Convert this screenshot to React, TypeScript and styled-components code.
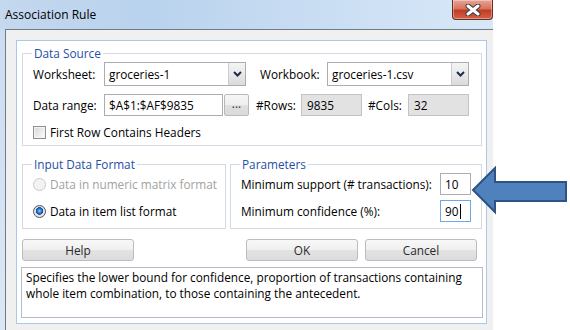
import React from 'react'
import styled, { createGlobalStyle } from 'styled-components'

const GlobalStyle = createGlobalStyle`
  html, body {
    margin: 0;
    padding: 0;
    background: #ffffff;
  }
  body {
    font-family: 'Open Sans', 'Liberation Sans', Arial, sans-serif;
    font-size: 11.8px;
    color: #000;
  }
  * {
    box-sizing: border-box;
  }
`

const App = () => {
  return (
    <Page>
      <GlobalStyle />
      <Window>
        <TitleBar>
          <Title>Association Rule</Title>
          <CloseButton>
            <svg width="16" height="12" viewBox="0 0 16 12">
              <path d="M3 2 L13 10 M13 2 L3 10" stroke="#3b3b3b" strokeWidth="5" strokeLinecap="round" />
              <path d="M3 2 L13 10 M13 2 L3 10" stroke="#ffffff" strokeWidth="3" strokeLinecap="round" />
            </svg>
          </CloseButton>
        </TitleBar>
        <Client>
          <Panel>
            <GroupBox $pb={5}>
              <Legend>Data Source</Legend>
              <Row $h={24}>
                <FieldLabel $w={71}>Worksheet:</FieldLabel>
                <ComboBox $w={142}>
                  <span>groceries-1</span>
                  <DropButton>
                    <svg width="9" height="6" viewBox="0 0 9 6">
                      <path d="M1 1 L4.5 4.5 L8 1" stroke="#1c2d4c" strokeWidth="2" fill="none" />
                    </svg>
                  </DropButton>
                </ComboBox>
                <FieldLabel $w={67} $ml={14}>Workbook:</FieldLabel>
                <ComboBox $w={142}>
                  <span>groceries-1.csv</span>
                  <DropButton>
                    <svg width="9" height="6" viewBox="0 0 9 6">
                      <path d="M1 1 L4.5 4.5 L8 1" stroke="#1c2d4c" strokeWidth="2" fill="none" />
                    </svg>
                  </DropButton>
                </ComboBox>
              </Row>
              <Row $h={22} $mt={8}>
                <FieldLabel $w={71}>Data range:</FieldLabel>
                <TextField $w={119}>$A$1:$AF$9835</TextField>
                <BrowseButton>...</BrowseButton>
                <FieldLabel $w={45} $ml={7}>#Rows:</FieldLabel>
                <TextField $w={61} $readOnly>9835</TextField>
                <FieldLabel $w={40} $ml={6}>#Cols:</FieldLabel>
                <TextField $w={61} $readOnly>32</TextField>
              </Row>
              <Row $h={16} $mt={8}>
                <CheckBox />
                <OptionText>First Row Contains Headers</OptionText>
              </Row>
            </GroupBox>

            <BottomGroups>
              <GroupBox $w={204} $pb={6}>
                <Legend>Input Data Format</Legend>
                <Row $h={22}>
                  <Radio />
                  <OptionText $disabled>Data in numeric matrix format</OptionText>
                </Row>
                <Row $h={22} $mt={5}>
                  <Radio $checked />
                  <OptionText>Data in item list format</OptionText>
                </Row>
              </GroupBox>
              <GroupBox $grow $pb={6}>
                <Legend>Parameters</Legend>
                <Row $h={22}>
                  <FieldLabel $grow>Minimum support (# transactions):</FieldLabel>
                  <TextField $w={31}>10</TextField>
                </Row>
                <Row $h={22} $mt={5}>
                  <FieldLabel $grow>Minimum confidence (%):</FieldLabel>
                  <TextField $w={31} $focused>
                    90
                    <Caret />
                  </TextField>
                </Row>
              </GroupBox>
            </BottomGroups>

            <ButtonRow>
              <PushButton>Help</PushButton>
              <ButtonGroup>
                <PushButton>OK</PushButton>
                <PushButton>Cancel</PushButton>
              </ButtonGroup>
            </ButtonRow>

            <Description>
              Specifies the lower bound for confidence, proportion of transactions containing
              whole item combination, to those containing the antecedent.
            </Description>
          </Panel>
        </Client>
      </Window>

      <Arrow width="98" height="50" viewBox="0 0 98 50">
        <polygon
          points="2,24 24,2 24,16 95,16 95,35 24,35 24,46"
          fill="#4f81bd"
          stroke="#2f5382"
          strokeWidth="2"
          strokeLinejoin="miter"
        />
      </Arrow>
    </Page>
  )
}

export default App

interface RowProps {
  $h: number
  $mt?: number
}
interface LabelProps {
  $w?: number
  $ml?: number
  $grow?: boolean
}
interface FieldProps {
  $w: number
  $readOnly?: boolean
  $focused?: boolean
}
interface GroupProps {
  $w?: number
  $grow?: boolean
  $pb: number
}

const Page = styled.div`
  position: relative;
  width: 570px;
  height: 330px;
  overflow: hidden;
  background: #ffffff;
`

const Window = styled.div`
  width: 493px;
  height: 330px;
  display: flex;
  flex-direction: column;
  background: linear-gradient(to bottom, #c9dcf1, #dbe7f4);
`

const TitleBar = styled.div`
  height: 29px;
  flex-shrink: 0;
  display: flex;
  justify-content: space-between;
  align-items: flex-start;
  background: linear-gradient(to right, #c4d8ee 0%, #b9d2ed 30%, #c7dcf2 60%, #d8e8f8 100%);
`

const Title = styled.div`
  padding-left: 5px;
  line-height: 29px;
  font-size: 12px;
  color: #000;
`

const CloseButton = styled.div`
  width: 41px;
  height: 20px;
  display: flex;
  align-items: center;
  justify-content: center;
  border: 1px solid #6d2a1f;
  border-top: none;
  border-radius: 0 0 4px 4px;
  background: linear-gradient(to bottom, #e7a596 0%, #d8735e 45%, #c23b22 55%, #d0654a 100%);
  box-shadow: inset 0 0 0 1px rgba(255, 255, 255, 0.35);
`

const Client = styled.div`
  flex: 1;
  margin-left: 5px;
  border-top: 1px solid #6f7b89;
  border-left: 1px solid #6f7b89;
  background: #f0f0f0;
  padding: 10px 6px 0 10px;
`

const Panel = styled.div`
  background: #ffffff;
  border: 1px solid #a9c8ea;
  padding: 5px 4px 5px 5px;
  display: flex;
  flex-direction: column;
`

const GroupBox = styled.fieldset<GroupProps>`
  margin: 0;
  min-width: 0;
  padding: 2px 10px ${(p) => p.$pb}px 10px;
  border: 1px solid #d3dae3;
  ${(p) => (p.$w ? `width: ${p.$w}px; flex-shrink: 0;` : '')}
  ${(p) => (p.$grow ? 'flex: 1;' : '')}
`

const Legend = styled.legend`
  padding: 0 2px;
  margin-left: -1px;
  line-height: 14px;
  color: #1f4fa3;
`

const Row = styled.div<RowProps>`
  display: flex;
  align-items: center;
  height: ${(p) => p.$h}px;
  margin-top: ${(p) => p.$mt || 0}px;
`

const FieldLabel = styled.div<LabelProps>`
  ${(p) => (p.$w ? `width: ${p.$w}px;` : '')}
  ${(p) => (p.$grow ? 'flex: 1;' : 'flex-shrink: 0;')}
  margin-left: ${(p) => p.$ml || 0}px;
  white-space: nowrap;
  color: #000;
`

const ComboBox = styled.div<{ $w: number }>`
  width: ${(p) => p.$w}px;
  height: 24px;
  display: flex;
  align-items: center;
  justify-content: space-between;
  border: 1px solid #abadb3;
  background: #ffffff;
  span {
    padding-left: 4px;
  }
`

const DropButton = styled.div`
  width: 17px;
  height: 22px;
  display: flex;
  align-items: center;
  justify-content: center;
  border-left: 1px solid #c9ccd2;
  background: linear-gradient(to bottom, #f4f4f4 0%, #e9e9e9 50%, #dadada 100%);
`

const TextField = styled.div<FieldProps>`
  width: ${(p) => p.$w}px;
  height: 22px;
  flex-shrink: 0;
  display: flex;
  align-items: center;
  padding-left: ${(p) => (p.$readOnly ? 5 : 4)}px;
  white-space: nowrap;
  border: 1px solid ${(p) => (p.$focused ? '#6fa8e2' : p.$readOnly ? '#c3c3c3' : '#abadb3')};
  background: ${(p) => (p.$readOnly ? '#e2e2e2' : '#ffffff')};
`

const Caret = styled.span`
  display: inline-block;
  width: 1px;
  height: 15px;
  margin-left: 1px;
  background: #000;
`

const BrowseButton = styled.div`
  width: 25px;
  height: 22px;
  margin-left: 1px;
  flex-shrink: 0;
  display: flex;
  align-items: center;
  justify-content: center;
  padding-bottom: 4px;
  border: 1px solid #b9b9b9;
  border-radius: 2px;
  background: linear-gradient(to bottom, #f6f6f6 0%, #eeeeee 50%, #e0e0e0 51%, #dadada 100%);
  color: #333;
`

const CheckBox = styled.div`
  width: 13px;
  height: 13px;
  flex-shrink: 0;
  border: 1px solid #8e8f8f;
  background: linear-gradient(135deg, #d6d6d6 0%, #f2f2f2 70%, #fbfbfb 100%);
  box-shadow: inset 0 0 0 1px #f4f4f4;
`

const Radio = styled.div<{ $checked?: boolean }>`
  width: 13px;
  height: 13px;
  flex-shrink: 0;
  border-radius: 50%;
  border: 1px solid ${(p) => (p.$checked ? '#4b5562' : '#cacaca')};
  background: ${(p) =>
    p.$checked
      ? 'radial-gradient(circle at 50% 45%, #8fd0ff 0px, #2a7fd8 2px, #12468e 3.5px, #dedede 4px, #f7f7f7 100%)'
      : '#f3f3f3'};
`

const OptionText = styled.span<{ $disabled?: boolean }>`
  margin-left: 4px;
  white-space: nowrap;
  color: ${(p) => (p.$disabled ? '#a2a2a2' : '#000')};
`

const BottomGroups = styled.div`
  display: flex;
  gap: 4px;
  margin-top: 11px;
`

const ButtonRow = styled.div`
  display: flex;
  justify-content: space-between;
  margin-top: 10px;
`

const ButtonGroup = styled.div`
  display: flex;
  gap: 7px;
  margin-right: 5px;
`

const PushButton = styled.div`
  width: 112px;
  height: 22px;
  display: flex;
  align-items: center;
  justify-content: center;
  border: 1px solid #bcbcbc;
  border-radius: 3px;
  background: linear-gradient(to bottom, #f8f8f8 0%, #f0f0f0 48%, #e3e3e3 52%, #dcdcdc 100%);
  color: #2a2a2a;
`

const Description = styled.div`
  height: 51px;
  margin: 6px -1px 0;
  padding: 1px 4px;
  border: 1px solid #b4bccb;
  line-height: 16px;
  color: #000;
`

const Arrow = styled.svg`
  position: absolute;
  left: 471px;
  top: 166px;
`
